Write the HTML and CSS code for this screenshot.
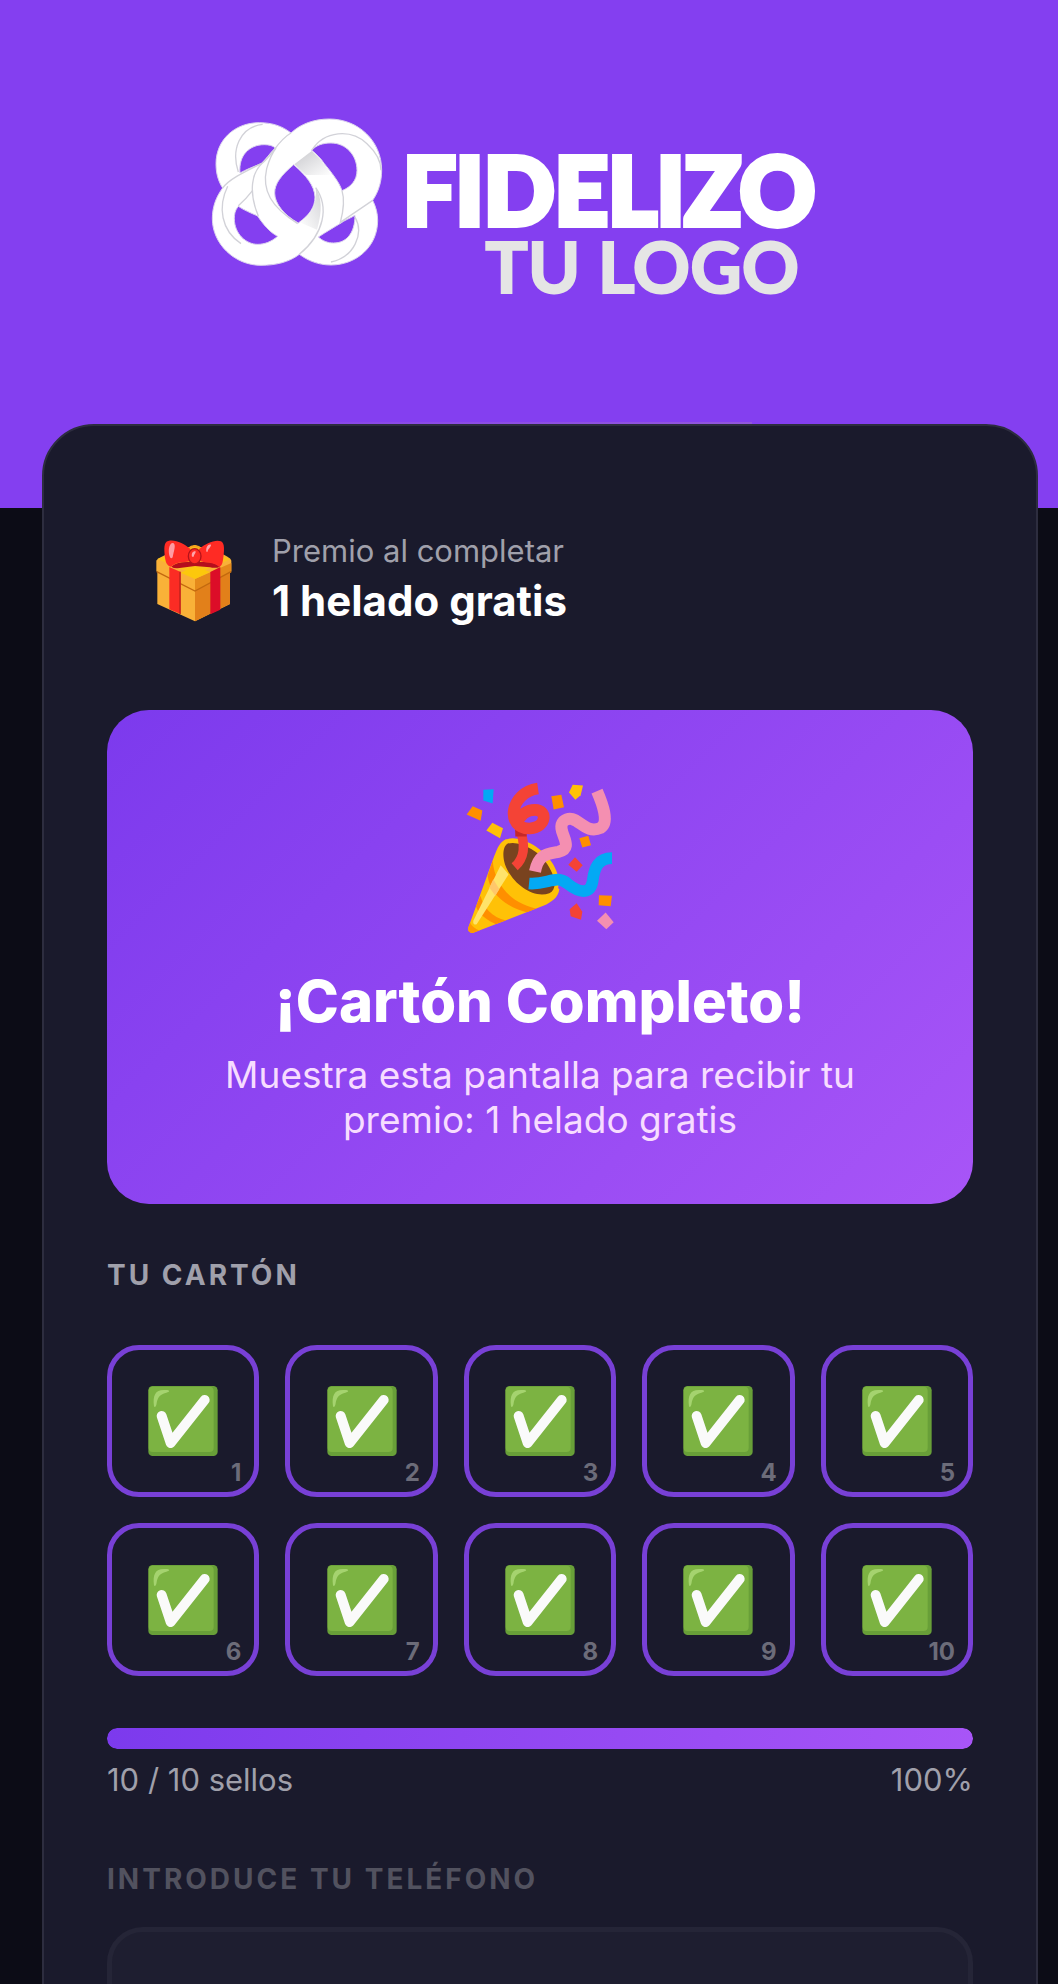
FILE: index.html
```html
<!DOCTYPE html>
<html lang="es">
<head>
<meta charset="utf-8">
<meta name="viewport" content="width=device-width, initial-scale=1">
<title>Tarjeta de sellos</title>
<link rel="stylesheet" href="styles.css">
</head>
<body>
<svg class="defs" aria-hidden="true">
  <symbol id="check" viewBox="173 195 208 210">
    <rect x="173" y="195" width="208" height="210" rx="13" fill="#689f38"/>
    <path d="M186 197H356q13 0 13 13V380q0 13-13 13H186q-12 0-12-12V209q0-12 12-12z" fill="#7cb342"/>
    <path d="M190 256C186 222 194 205 224 207C240 207 238 213 227 215C206 220 200 232 198 247C197 257 192 261 190 256z" fill="#a5d36f"/>
    <path d="M213 285L240 366L342 237" fill="none" stroke="#fafafa" stroke-width="30" stroke-linecap="round" stroke-linejoin="round"/>
  </symbol>
</svg>
<main class="app">
  <header class="hero">
    <div class="logo">
      <svg class="logo-mark" viewBox="40 50 516 450" aria-hidden="true">
        <defs>
          <linearGradient id="fold" x1="0" y1="0" x2="1" y2="1"><stop offset="0" stop-color="#c9c9cd"/><stop offset="1" stop-color="#fff"/></linearGradient>
          <linearGradient id="fold2" x1="1" y1="0" x2="0" y2="1"><stop offset="0" stop-color="#d4d4d8"/><stop offset="1" stop-color="#fff"/></linearGradient>
        </defs>
        <path fill="#fff" stroke="#dcd3ee" stroke-width="3" fill-rule="evenodd" d="M280 98C310 70 350 56 395 56C480 56 552 120 552 210C552 245 542 275 525 300C535 320 540 340 540 360C540 440 475 494 400 494C360 494 330 480 305 462C275 485 235 495 190 495C110 495 44 430 44 355C44 320 55 290 75 263C60 240 55 215 55 190C55 120 110 67 185 67C225 67 255 78 280 98Z
        M127 218C122 165 155 133 200 133C215 133 225 136 233 143C215 160 203 180 190 190C165 200 145 208 127 218Z
        M342 150C355 135 375 128 400 128C445 128 478 165 478 210C478 240 460 260 433 271C425 245 400 215 380 190C370 175 355 160 342 150Z
        M288 193C250 225 231 250 231 278C231 310 260 345 302 368C335 345 352 320 352 290C350 255 325 225 288 193Z
        M122 318C112 330 110 342 110 355C110 400 145 432 180 432C200 432 220 425 240 408C215 395 195 370 180 347C160 338 140 330 122 318Z
        M362 410C375 422 390 428 408 428C445 428 472 400 472 345C455 355 440 360 430 368C410 380 385 395 362 410Z"/>
        <path fill="url(#fold)" d="M342 152C370 175 385 200 402 225C375 222 345 225 325 224L290 192Z"/>
        <path fill="url(#fold2)" d="M354 262C372 290 375 330 358 388L306 366C340 345 360 310 354 262Z"/>
        <g fill="none" stroke="#d2d2d8" stroke-width="4">
          <path d="M122 215C100 150 125 80 195 72"/>
          <path d="M300 370C220 320 192 270 207 205C214 180 222 160 235 143"/>
          <path d="M182 347C150 270 165 215 192 190C225 165 240 120 280 98"/>
          <path d="M75 263C95 235 150 210 190 190"/>
          <path d="M165 270C150 290 140 300 122 316"/>
          <path d="M90 258C60 320 70 390 130 430"/>
          <path d="M342 150C380 90 460 85 508 130C535 155 550 180 550 210"/>
          <path d="M433 271C442 300 435 340 428 366L525 300"/>
          <path d="M354 262C395 320 380 400 305 462"/>
          <path d="M472 350C500 400 470 470 400 485"/>
        </g>
      </svg>
      <div class="logo-words">
        <span class="logo-name">FIDELIZO</span>
        <span class="logo-sub">TU LOGO</span>
      </div>
    </div>
  </header>

  <section class="card">
    <div class="reward">
      <svg class="gift" viewBox="48 50 234 255" role="img" aria-label="Regalo">
        <path d="M55 145L168 105L273 145V248L168 300L55 248z" fill="#f9b138"/>
        <path d="M168 190L273 145V248L168 300z" fill="#e2801a"/>
        <path d="M52 118Q53 112 80 100L168 72L255 100Q276 110 277 118V150L168 207L52 150z" fill="#f9b138"/>
        <path d="M168 173L277 125V153L168 210z" fill="#e58a1b"/>
        <path d="M55 113L168 72L275 113L168 160z" fill="#fcc21b"/>
        <path d="M53 151L168 209L276 151" fill="none" stroke="#c2690f" stroke-width="4"/>
        <path d="M91 137L125 152V278L91 264z" fill="#fb2c24"/>
        <path d="M123 151V278" stroke="#b8231c" stroke-width="4"/>
        <path d="M244 137L214 152V279L244 265z" fill="#dc0d28"/>
        <path d="M125 154L168 135L213 152L168 173z" fill="#fcc80c"/>
        <path d="M148 82Q166 66 188 83" fill="none" stroke="#f5a51c" stroke-width="6"/>
        <path d="M97 136Q110 121 150 122H190Q230 121 243 136Q230 142 213 138L168 134L122 140Q105 142 97 136z" fill="#b50d1d"/>
        <path d="M155 84C135 66 108 54 88 59C74 62 75 80 78 110Q82 136 96 136C115 120 132 125 152 120z" fill="#ff2b24"/>
        <path d="M180 84C200 66 228 54 246 60C258 65 256 90 252 116Q249 136 240 136C222 121 202 126 184 120z" fill="#ff2b24"/>
        <ellipse cx="167" cy="105" rx="19" ry="23" fill="#ff2b24" stroke="#b3131a" stroke-width="4"/>
        <path d="M93 108C86 90 90 67 100 65C114 65 104 90 101 108Q97 114 93 108z" fill="#ff9ba3"/>
        <path d="M202 91C200 76 208 67 216 70C217 77 207 81 206 91z" fill="#ffa4aa"/>
        <path d="M159 106C156 95 163 88 170 90C171 96 165 98 164 106z" fill="#ffa4aa"/>
      </svg>
      <div>
        <p class="reward-label">Premio al completar</p>
        <p class="reward-name">1 helado gratis</p>
      </div>
    </div>

    <div class="banner">
      <svg class="popper" viewBox="105 60 450 470" role="img" aria-label="Celebración">
        <defs><clipPath id="cone"><path d="M228 240C208 250 203 265 193 290L115 505Q112 523 130 521L340 440C365 428 385 415 388 390z"/></clipPath></defs>
        <path d="M228 240C208 250 203 265 193 290L115 505Q112 523 130 521L340 440C365 428 385 415 388 390z" fill="#ffc107"/>
        <g clip-path="url(#cone)">
          <path d="M188 305C195 390 260 440 330 450L300 462C225 445 178 400 173 350z" fill="#ff8f00"/>
          <path d="M152 410C160 450 195 480 235 485L205 498C170 485 140 460 138 440z" fill="#ff8f00"/>
          <path d="M120 490Q128 507 150 515L128 525L108 515z" fill="#ff9800"/>
          <path d="M212 318L236 345L140 495Q128 500 130 485z" fill="#ffe36a"/>
          <path d="M190 360L208 390L196 410L178 385z" fill="#ffc76b"/>
        </g>
        <path d="M228 241C265 225 335 262 366 310C392 350 395 395 365 407C310 420 240 375 218 310C208 275 212 250 228 241z" fill="#ffc107"/>
        <path d="M232 254C262 242 325 270 352 315C378 355 382 390 358 402C312 420 246 375 225 316C216 288 220 262 232 254z" fill="#79431f"/>
        <path d="M254 323C286 295 287 255 268 205" fill="none" stroke="#f44336" stroke-width="28"/>
        <path d="M255 200L290 212V232H256z" fill="#c62828"/>
        <path d="M324 88C238 100 225 210 300 208C352 203 352 152 315 152C292 152 272 165 262 190" fill="none" stroke="#f44336" stroke-width="35"/>
        <path d="M315 337C325 285 350 285 385 278C440 265 375 215 400 187C440 155 460 230 512 206C538 190 518 135 501 96" fill="none" stroke="#f48fb1" stroke-width="36"/>
        <path d="M297 373C350 378 380 345 412 373C455 407 482 402 488 365C493 325 505 297 546 297" fill="none" stroke="#03a9f4" stroke-width="35"/>
        <g fill="#ff8f00"><path d="M128 141L157 154L152 185L110 166z"/><path d="M364 111L394 107L402 144L371 151z"/><path d="M448 237L475 230L483 258L457 265z"/><path d="M507 408L546 410L542 441L506 438z"/></g>
        <g fill="#ffc107"><path d="M187 191L219 207L210 237L169 214z"/><path d="M428 77L459 79L452 108L436 122L417 100z"/></g>
        <path d="M160 92L191 90L188 133L160 124z" fill="#03a9f4"/>
        <g fill="#f44336"><path d="M435 294L458 318L440 338L415 317z"/><path d="M440 432L457 458L453 482L422 471L419 450z"/></g>
        <path d="M527 460L551 489L529 510L501 485z" fill="#f48fb1"/>
      </svg>
      <h1>¡Cartón Completo!</h1>
      <p>Muestra esta pantalla para recibir tu premio: 1 helado gratis</p>
    </div>

    <h2 class="section-title">Tu cartón</h2>
    <ol class="stamps">
      <li><svg><use href="#check"/></svg><span>1</span></li>
      <li><svg><use href="#check"/></svg><span>2</span></li>
      <li><svg><use href="#check"/></svg><span>3</span></li>
      <li><svg><use href="#check"/></svg><span>4</span></li>
      <li><svg><use href="#check"/></svg><span>5</span></li>
      <li><svg><use href="#check"/></svg><span>6</span></li>
      <li><svg><use href="#check"/></svg><span>7</span></li>
      <li><svg><use href="#check"/></svg><span>8</span></li>
      <li><svg><use href="#check"/></svg><span>9</span></li>
      <li><svg><use href="#check"/></svg><span>10</span></li>
    </ol>

    <div class="progress"><div class="progress-fill" style="width:100%"></div></div>
    <div class="progress-text"><span>10 / 10 sellos</span><span>100%</span></div>

    <form class="phone-form">
      <label class="section-title" for="phone">Introduce tu teléfono</label>
      <input id="phone" type="tel" disabled>
    </form>
  </section>
</main>
</body>
</html>
```
FILE: styles.css
```css
* { box-sizing: border-box; }

body {
  margin: 0;
  background: #0c0c16;
  color: #fff;
  font-family: Inter, "Liberation Sans", sans-serif;
}

h1, h2, p, ol { margin: 0; padding: 0; }

.defs { position: absolute; width: 0; height: 0; }

.app {
  height: 100vh;
  overflow-y: auto;
  scrollbar-width: none;
}

.hero {
  display: flex;
  justify-content: center;
  align-items: flex-start;
  min-height: 508px;
  padding: 117px 32px 0 0;
  background: #843ff0;
}

.logo { display: flex; gap: 20px; }

.logo-mark { width: 172px; height: 150px; }

.logo-words {
  display: flex;
  flex-direction: column;
  align-items: flex-end;
  padding-top: 24px;
  font-family: Lato, "Open Sans", sans-serif;
}

.logo-name {
  color: #fff;
  font-size: 93px;
  font-weight: 900;
  line-height: 96px;
  -webkit-text-stroke: 6px #fff;
  text-shadow: 0 1px 2px #d0d0d4;
}

.logo-sub {
  padding-right: 16px;
  color: #e5e5e5;
  font-size: 71px;
  font-weight: 700;
  line-height: 58px;
  -webkit-text-stroke: 2px #e5e5e5;
}

.card {
  position: relative;
  margin: -84px 20px 0 42px;
  padding: 104px 63px 64px;
  border: 2px solid #2d2d3f;
  border-radius: 52px;
  background: #1a1a2c;
}

/* faint highlight above the card edge */
.card::before {
  content: "";
  position: absolute;
  top: -4px;
  left: 48px;
  right: 284px;
  height: 2px;
  background: linear-gradient(90deg, transparent, #9257dc);
}

.reward {
  display: flex;
  align-items: center;
  gap: 39px;
  padding: 0 48px;
}

.gift { width: 78px; height: 85px; }

.reward-label {
  color: #a0a0ab;
  font-size: 31px;
  line-height: 42px;
}

.reward-name {
  font-size: 42px;
  font-weight: 700;
  line-height: 58px;
}

.banner {
  display: flex;
  flex-direction: column;
  align-items: center;
  margin-top: 80px;
  padding: 69px 63px 62px;
  border-radius: 42px;
  background: linear-gradient(135deg, #7c3aed, #a855f7);
  text-align: center;
}

.popper { width: 150px; height: 157px; }

.banner h1 {
  margin-top: 33px;
  font-size: 58px;
  font-weight: 800;
  line-height: 64px;
}

.banner p {
  margin-top: 19px;
  color: #f7dcff;
  font-size: 37px;
  line-height: 45px;
}

.section-title {
  display: block;
  margin-top: 53px;
  color: #a0a0ab;
  font-size: 28px;
  font-weight: 700;
  letter-spacing: 3px;
  line-height: 36px;
  text-transform: uppercase;
}

.stamps {
  display: grid;
  grid-template-columns: repeat(5, 1fr);
  gap: 26px;
  margin-top: 52px;
  list-style: none;
}

.stamps li {
  position: relative;
  display: grid;
  place-items: center;
  aspect-ratio: 1;
  border: 5px solid #7840d6;
  border-radius: 32px;
}

.stamps svg { width: 70px; height: 70px; }

.stamps span {
  position: absolute;
  right: 13px;
  bottom: 5px;
  color: #6c6c79;
  font-size: 24px;
  font-weight: 700;
  line-height: 28px;
}

.progress {
  height: 21px;
  margin-top: 52px;
  border-radius: 10px;
  overflow: hidden;
}

.progress-fill {
  height: 100%;
  border-radius: 10px;
  background: linear-gradient(90deg, #7c3aed, #a855f7);
}

.progress-text {
  display: flex;
  justify-content: space-between;
  margin-top: 10px;
  color: #a0a0ab;
  font-size: 31px;
  line-height: 42px;
}

.phone-form { margin-top: 60px; }

.phone-form .section-title { margin: 0; color: #52525f; }

.phone-form input {
  display: block;
  width: 100%;
  height: 140px;
  margin-top: 30px;
  padding: 0 40px;
  border: 5px solid #252537;
  border-radius: 36px;
  background: #1e1e30;
  color: #fff;
  font: inherit;
  font-size: 36px;
}
```
